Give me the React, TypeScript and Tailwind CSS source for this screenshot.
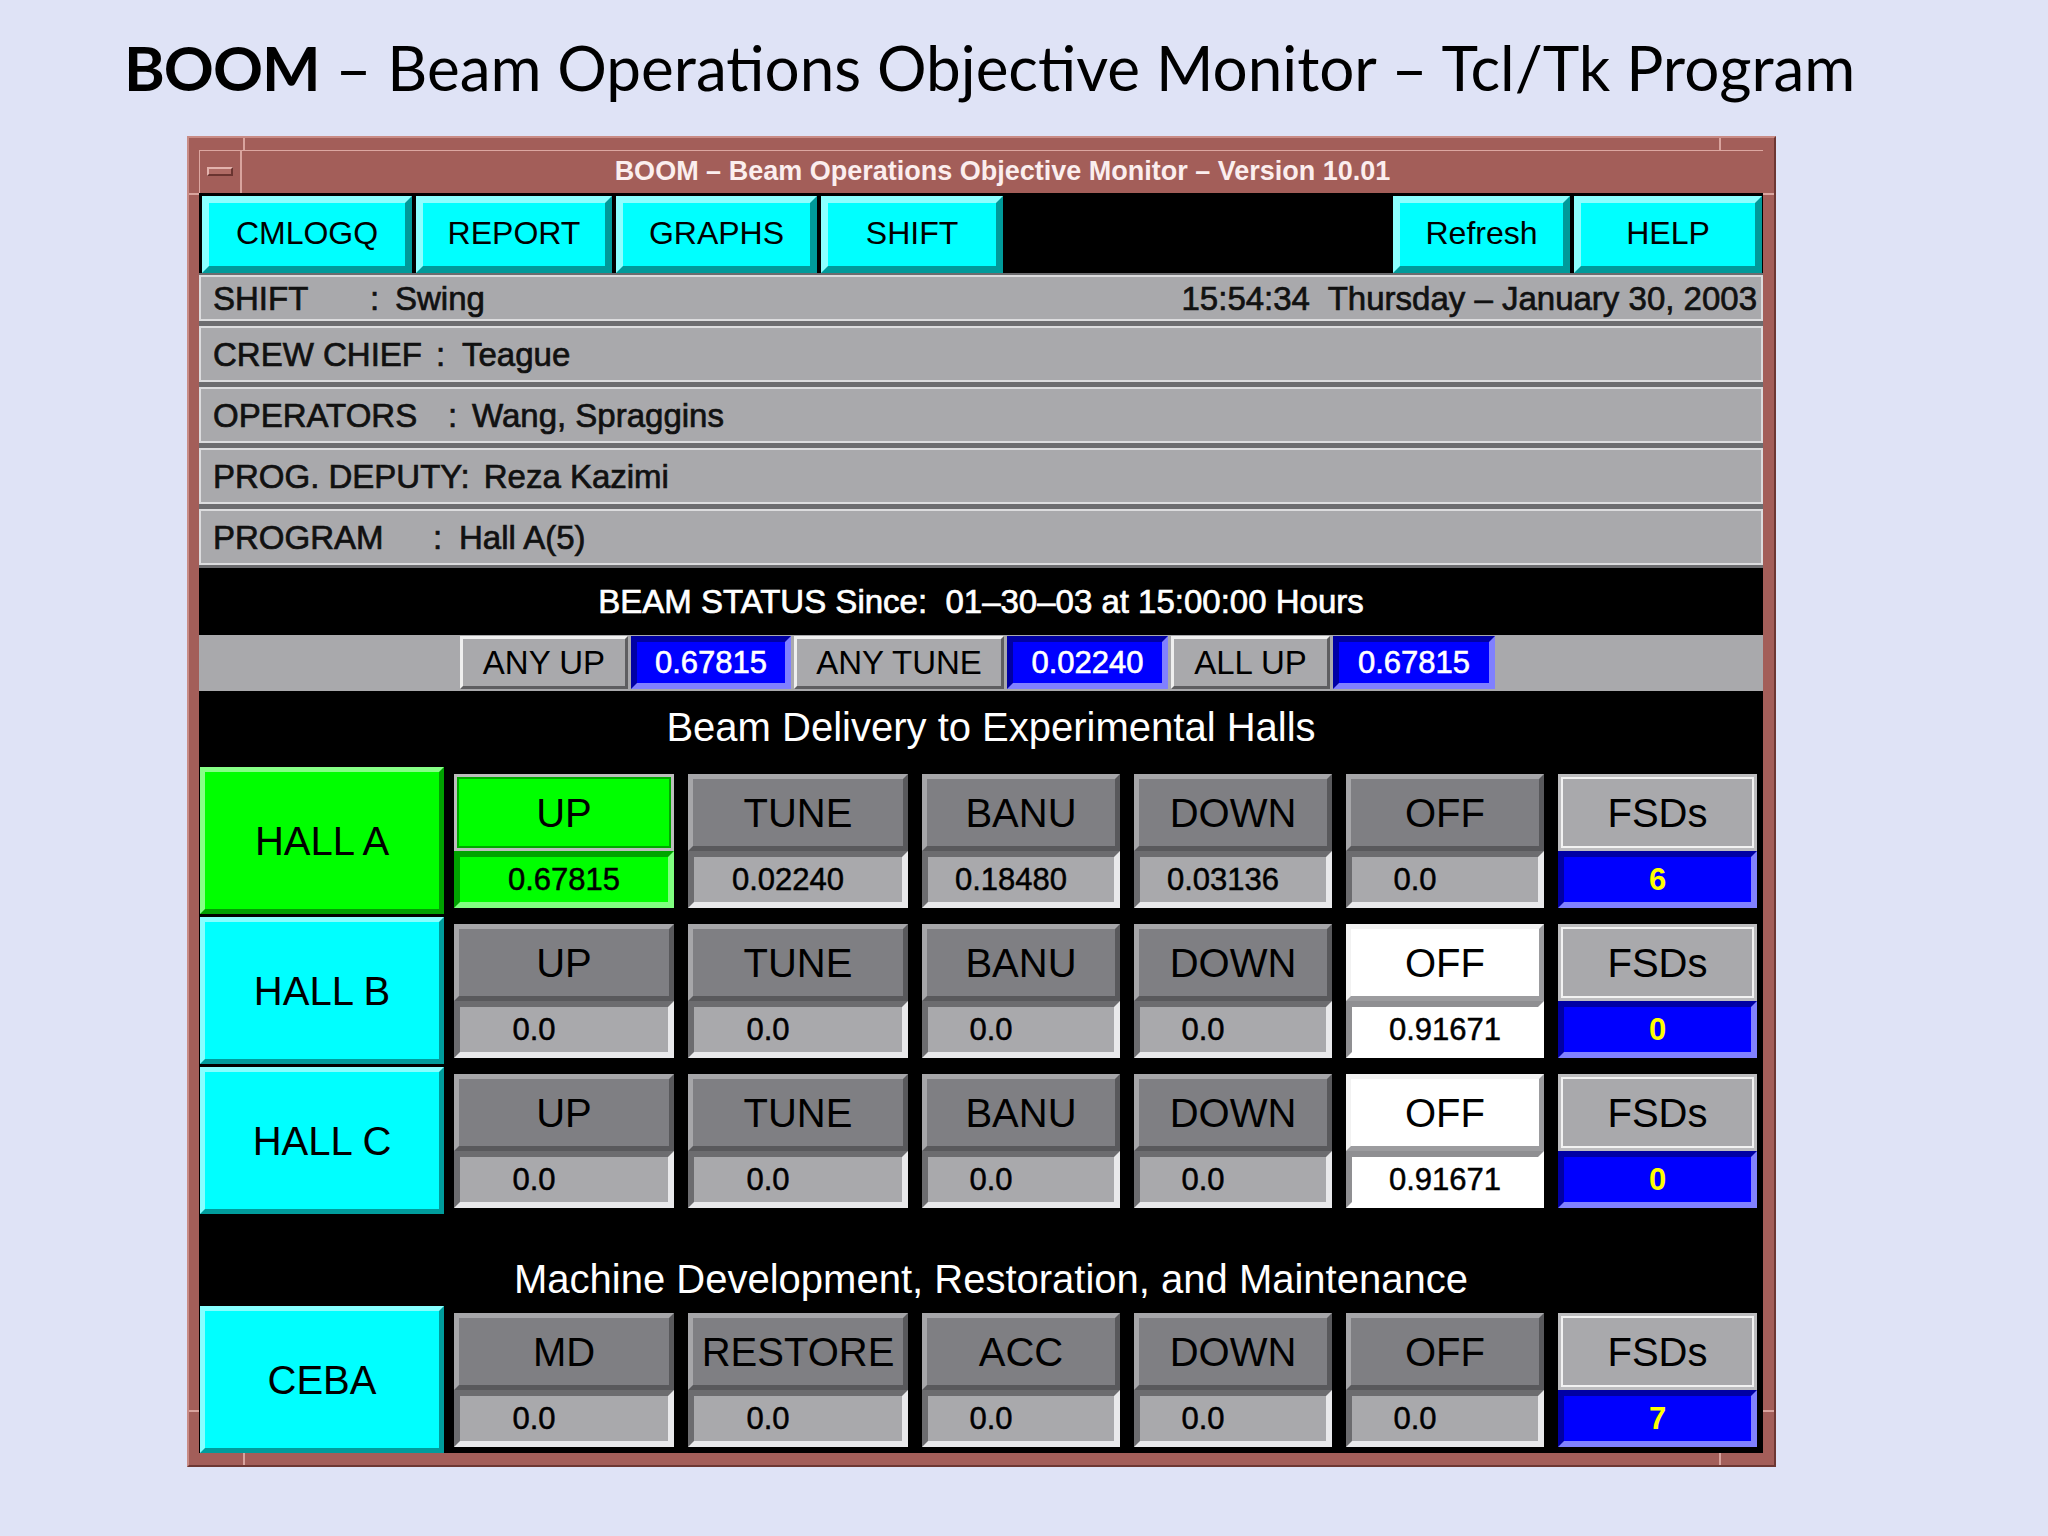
import React from "react";

type Tone = "gray" | "green" | "white";

const labelTone: Record<Tone, string> = {
  gray: "bg-[#7f7f83] border-[5px] border-t-[#a6a6a9] border-l-[#a6a6a9] border-b-[#59595c] border-r-[#59595c]",
  green: "bg-[#00ff00] border-[3px] border-[#bdbdbd] shadow-[inset_0_0_0_2px_#00a800]",
  white: "bg-white border-[5px] border-t-[#f2f2f2] border-l-[#f2f2f2] border-b-[#9c9c9f] border-r-[#9c9c9f]",
};

const valueTone: Record<Tone, string> = {
  gray: "bg-[#a9a9ac] border-[6px] border-t-[#6c6c6f] border-l-[#6c6c6f] border-b-[#e9e9eb] border-r-[#e9e9eb]",
  green: "bg-[#00ff00] border-[6px] border-t-[#00a400] border-l-[#00a400] border-b-[#80ff80] border-r-[#80ff80]",
  white: "bg-white border-[6px] border-t-[#8f8f92] border-l-[#8f8f92] border-b-white border-r-white",
};

const cellWidths = ["w-[220px]", "w-[220px]", "w-[198px]", "w-[198px]", "w-[198px]"];

const cyanBevel =
  "bg-[#00ffff] border-[5px] border-t-[#86ffff] border-l-[#86ffff] border-b-[#009c9c] border-r-[#009c9c]";
const greenBevel =
  "bg-[#00ff00] border-[5px] border-t-[#86ff86] border-l-[#86ff86] border-b-[#00a000] border-r-[#00a000]";

type CellData = { label: string; value: string; tone?: Tone };
type RowData = { name: string; hall: "green" | "cyan"; cells: CellData[]; fsd: string };

const hallRows: RowData[] = [
  {
    name: "HALL A",
    hall: "green",
    cells: [
      { label: "UP", value: "0.67815", tone: "green" },
      { label: "TUNE", value: "0.02240" },
      { label: "BANU", value: "0.18480" },
      { label: "DOWN", value: "0.03136" },
      { label: "OFF", value: "0.0" },
    ],
    fsd: "6",
  },
  {
    name: "HALL B",
    hall: "cyan",
    cells: [
      { label: "UP", value: "0.0" },
      { label: "TUNE", value: "0.0" },
      { label: "BANU", value: "0.0" },
      { label: "DOWN", value: "0.0" },
      { label: "OFF", value: "0.91671", tone: "white" },
    ],
    fsd: "0",
  },
  {
    name: "HALL C",
    hall: "cyan",
    cells: [
      { label: "UP", value: "0.0" },
      { label: "TUNE", value: "0.0" },
      { label: "BANU", value: "0.0" },
      { label: "DOWN", value: "0.0" },
      { label: "OFF", value: "0.91671", tone: "white" },
    ],
    fsd: "0",
  },
];

const cebaRow: RowData = {
  name: "CEBA",
  hall: "cyan",
  cells: [
    { label: "MD", value: "0.0" },
    { label: "RESTORE", value: "0.0" },
    { label: "ACC", value: "0.0" },
    { label: "DOWN", value: "0.0" },
    { label: "OFF", value: "0.0" },
  ],
  fsd: "7",
};

function Cell({ label, value, tone = "gray", w }: CellData & { w: string }) {
  // short values sit left of centre, gray long ones a little left too
  const shift = value.length < 5 ? "pr-[60px]" : tone === "gray" ? "pr-[20px]" : "";
  return (
    <div className={`flex flex-col ${w}`}>
      <div className={`h-[77px] flex items-center justify-center text-[40px] leading-none text-black ${labelTone[tone]}`}>
        {label}
      </div>
      <div
        className={`h-[57px] flex items-center justify-center text-[31px] leading-none text-black [-webkit-text-stroke:0.5px_black] ${valueTone[tone]}`}
      >
        <span className={shift}>{value}</span>
      </div>
    </div>
  );
}

function FsdCell({ value }: { value: string }) {
  return (
    <div className="flex flex-col w-[199px]">
      <div className="h-[77px] flex items-center justify-center text-[40px] leading-none text-black bg-[#a9a9ac] border-[3px] border-[#bdbdbf] shadow-[inset_0_0_0_2px_#f2f2f2]">
        FSDs
      </div>
      <div className="h-[57px] flex items-center justify-center text-[31px] leading-none font-bold text-[#ffff00] bg-[#0000ff] border-[6px] border-t-[#0000a4] border-l-[#0000a4] border-b-[#8080ff] border-r-[#8080ff]">
        {value}
      </div>
    </div>
  );
}

function HallRow({ row }: { row: RowData }) {
  return (
    <div className="flex h-[147px]">
      <div
        className={`w-[244px] ml-[1px] flex items-center justify-center text-[40px] leading-none text-black ${
          row.hall === "green" ? greenBevel : cyanBevel
        }`}
      >
        {row.name}
      </div>
      <div className="ml-[10px] pt-[7px] flex gap-[14px]">
        {row.cells.map((c, i) => (
          <Cell key={c.label} {...c} w={cellWidths[i]} />
        ))}
        <FsdCell value={row.fsd} />
      </div>
    </div>
  );
}

function TopButton({ label, w }: { label: string; w: string }) {
  return (
    <div
      className={`${w} h-[77px] flex items-center justify-center pb-[3px] text-[32px] leading-none text-black bg-[#00ffff] border-[7px] border-t-[#8cffff] border-l-[#8cffff] border-b-[#009a9a] border-r-[#009a9a]`}
    >
      {label}
    </div>
  );
}

function InfoRow({ children, h }: { children: React.ReactNode; h: string }) {
  return (
    <div
      className={`${h} flex items-center justify-between pl-[12px] pr-[4px] bg-[#a9a9ac] border-2 border-[#dcdcde] text-[33px] leading-none text-[#111] [-webkit-text-stroke:0.7px_#111] whitespace-pre`}
    >
      {children}
    </div>
  );
}

function StripButton({ label, w }: { label: string; w: string }) {
  return (
    <div
      className={`${w} h-[53px] flex items-center justify-center text-[33px] leading-none text-black bg-[#a9a9ac] border-[3px] border-t-[#efefef] border-l-[#efefef] border-b-[#5e5e61] border-r-[#5e5e61]`}
    >
      {label}
    </div>
  );
}

function StripValue({ value, w }: { value: string; w: string }) {
  return (
    <div
      className={`${w} h-[53px] flex items-center justify-center text-[31px] leading-none text-white [-webkit-text-stroke:0.6px_white] bg-[#0000ff] border-[6px] border-t-[#0000a4] border-l-[#0000a4] border-b-[#8080ff] border-r-[#8080ff]`}
    >
      {value}
    </div>
  );
}

export default function App() {
  return (
    <div className="w-[2048px] h-[1536px] bg-[#dfe3f6] overflow-hidden">
      <div className="h-[136px] pl-[124px] pt-[36px] font-['Lato',sans-serif] text-[62px] leading-none text-black">
        <span className="font-bold tracking-[-1px]">BOOM</span> – Beam Operations Objective Monitor – Tcl/Tk Program
      </div>

      <div className="relative ml-[187px] w-[1589px] h-[1331px] bg-[#a35e59] border-2 border-t-[#c98c86] border-l-[#c98c86] border-b-[#6d3733] border-r-[#6d3733] pt-[12px] pl-[10px] pr-[11px] pb-[12px] font-['Liberation_Sans',Arial,sans-serif]">
        {/* frame corner ticks */}
        <span className="absolute left-[54px] top-0 w-[2px] h-[12px] bg-[#d9a49e]" />
        <span className="absolute left-[1530px] top-0 w-[2px] h-[12px] bg-[#d9a49e]" />
        <span className="absolute left-[54px] bottom-0 w-[2px] h-[12px] bg-[#d9a49e]" />
        <span className="absolute left-[1530px] bottom-0 w-[2px] h-[12px] bg-[#d9a49e]" />
        <span className="absolute left-0 top-[55px] w-[10px] h-[2px] bg-[#d9a49e]" />
        <span className="absolute right-0 top-[55px] w-[11px] h-[2px] bg-[#d9a49e]" />
        <span className="absolute left-0 top-[1272px] w-[10px] h-[2px] bg-[#d9a49e]" />
        <span className="absolute right-0 top-[1272px] w-[11px] h-[2px] bg-[#d9a49e]" />

        {/* title bar */}
        <div className="flex h-[43px] shadow-[inset_1px_1px_0_#dca7a1]">
          <div className="w-[43px] flex items-center justify-center border-r-2 border-[#d9a49e]">
            <div className="w-[26px] h-[9px] bg-[#b06b65] border-2 border-t-[#e3b3ad] border-l-[#e3b3ad] border-b-[#6a3430] border-r-[#6a3430]" />
          </div>
          <div className="flex-1 flex items-center justify-center text-[27px] font-bold text-[#fbeeee] leading-none">
            BOOM – Beam Operations Objective Monitor – Version 10.01
          </div>
        </div>

        {/* body */}
        <div className="h-[1260px] bg-black flex flex-col">
          <div className="flex justify-between pt-[3px] pl-[3px] pr-[1px] h-[80px]">
            <div className="flex gap-[4px]">
              <TopButton label="CMLOGQ" w="w-[210px]" />
              <TopButton label="REPORT" w="w-[196px]" />
              <TopButton label="GRAPHS" w="w-[201px]" />
              <TopButton label="SHIFT" w="w-[182px]" />
            </div>
            <div className="flex gap-[4px]">
              <TopButton label="Refresh" w="w-[177px]" />
              <TopButton label="HELP" w="w-[188px]" />
            </div>
          </div>

          <div className="h-[295px] bg-[#6c6c6f] flex flex-col gap-[5px] py-[2px]">
            <InfoRow h="h-[46px]">
              <span>
                <span className="inline-block w-[157px]">SHIFT</span>
                <span className="inline-block w-[25px]">:</span>Swing
              </span>
              <span>15:54:34  Thursday – January 30, 2003</span>
            </InfoRow>
            <InfoRow h="h-[56px]">
              <span>
                <span className="inline-block w-[223px]">CREW CHIEF</span>
                <span className="inline-block w-[26px]">:</span>Teague
              </span>
            </InfoRow>
            <InfoRow h="h-[56px]">
              <span>
                <span className="inline-block w-[235px]">OPERATORS</span>
                <span className="inline-block w-[24px]">:</span>Wang, Spraggins
              </span>
            </InfoRow>
            <InfoRow h="h-[56px]">
              <span>
                PROG. DEPUTY:<span className="inline-block w-[14px]" />Reza Kazimi
              </span>
            </InfoRow>
            <InfoRow h="h-[56px]">
              <span>
                <span className="inline-block w-[220px]">PROGRAM</span>
                <span className="inline-block w-[26px]">:</span>Hall A(5)
              </span>
            </InfoRow>
          </div>

          <div className="h-[67px] flex items-center justify-center text-[33px] text-white [-webkit-text-stroke:0.7px_white] leading-none whitespace-pre">
            BEAM STATUS Since:  01–30–03 at 15:00:00 Hours
          </div>

          <div className="h-[57px] bg-[#a9a9ac] flex items-center gap-[3px] pl-[261px]">
            <StripButton label="ANY UP" w="w-[168px]" />
            <StripValue value="0.67815" w="w-[160px]" />
            <StripButton label="ANY TUNE" w="w-[210px]" />
            <StripValue value="0.02240" w="w-[161px]" />
            <StripButton label="ALL UP" w="w-[159px]" />
            <StripValue value="0.67815" w="w-[162px]" />
          </div>

          <div className="h-[76px] flex items-center justify-center pl-[20px] pb-[4px] text-[40px] text-white leading-none">
            Beam Delivery to Experimental Halls
          </div>

          <div className="flex flex-col gap-[3px]">
            {hallRows.map((r) => (
              <HallRow key={r.name} row={r} />
            ))}
          </div>

          <div className="h-[92px] flex items-end justify-center pl-[20px] pb-[7px] text-[40px] text-white leading-none">
            Machine Development, Restoration, and Maintenance
          </div>

          <HallRow row={cebaRow} />
        </div>
      </div>
    </div>
  );
}
